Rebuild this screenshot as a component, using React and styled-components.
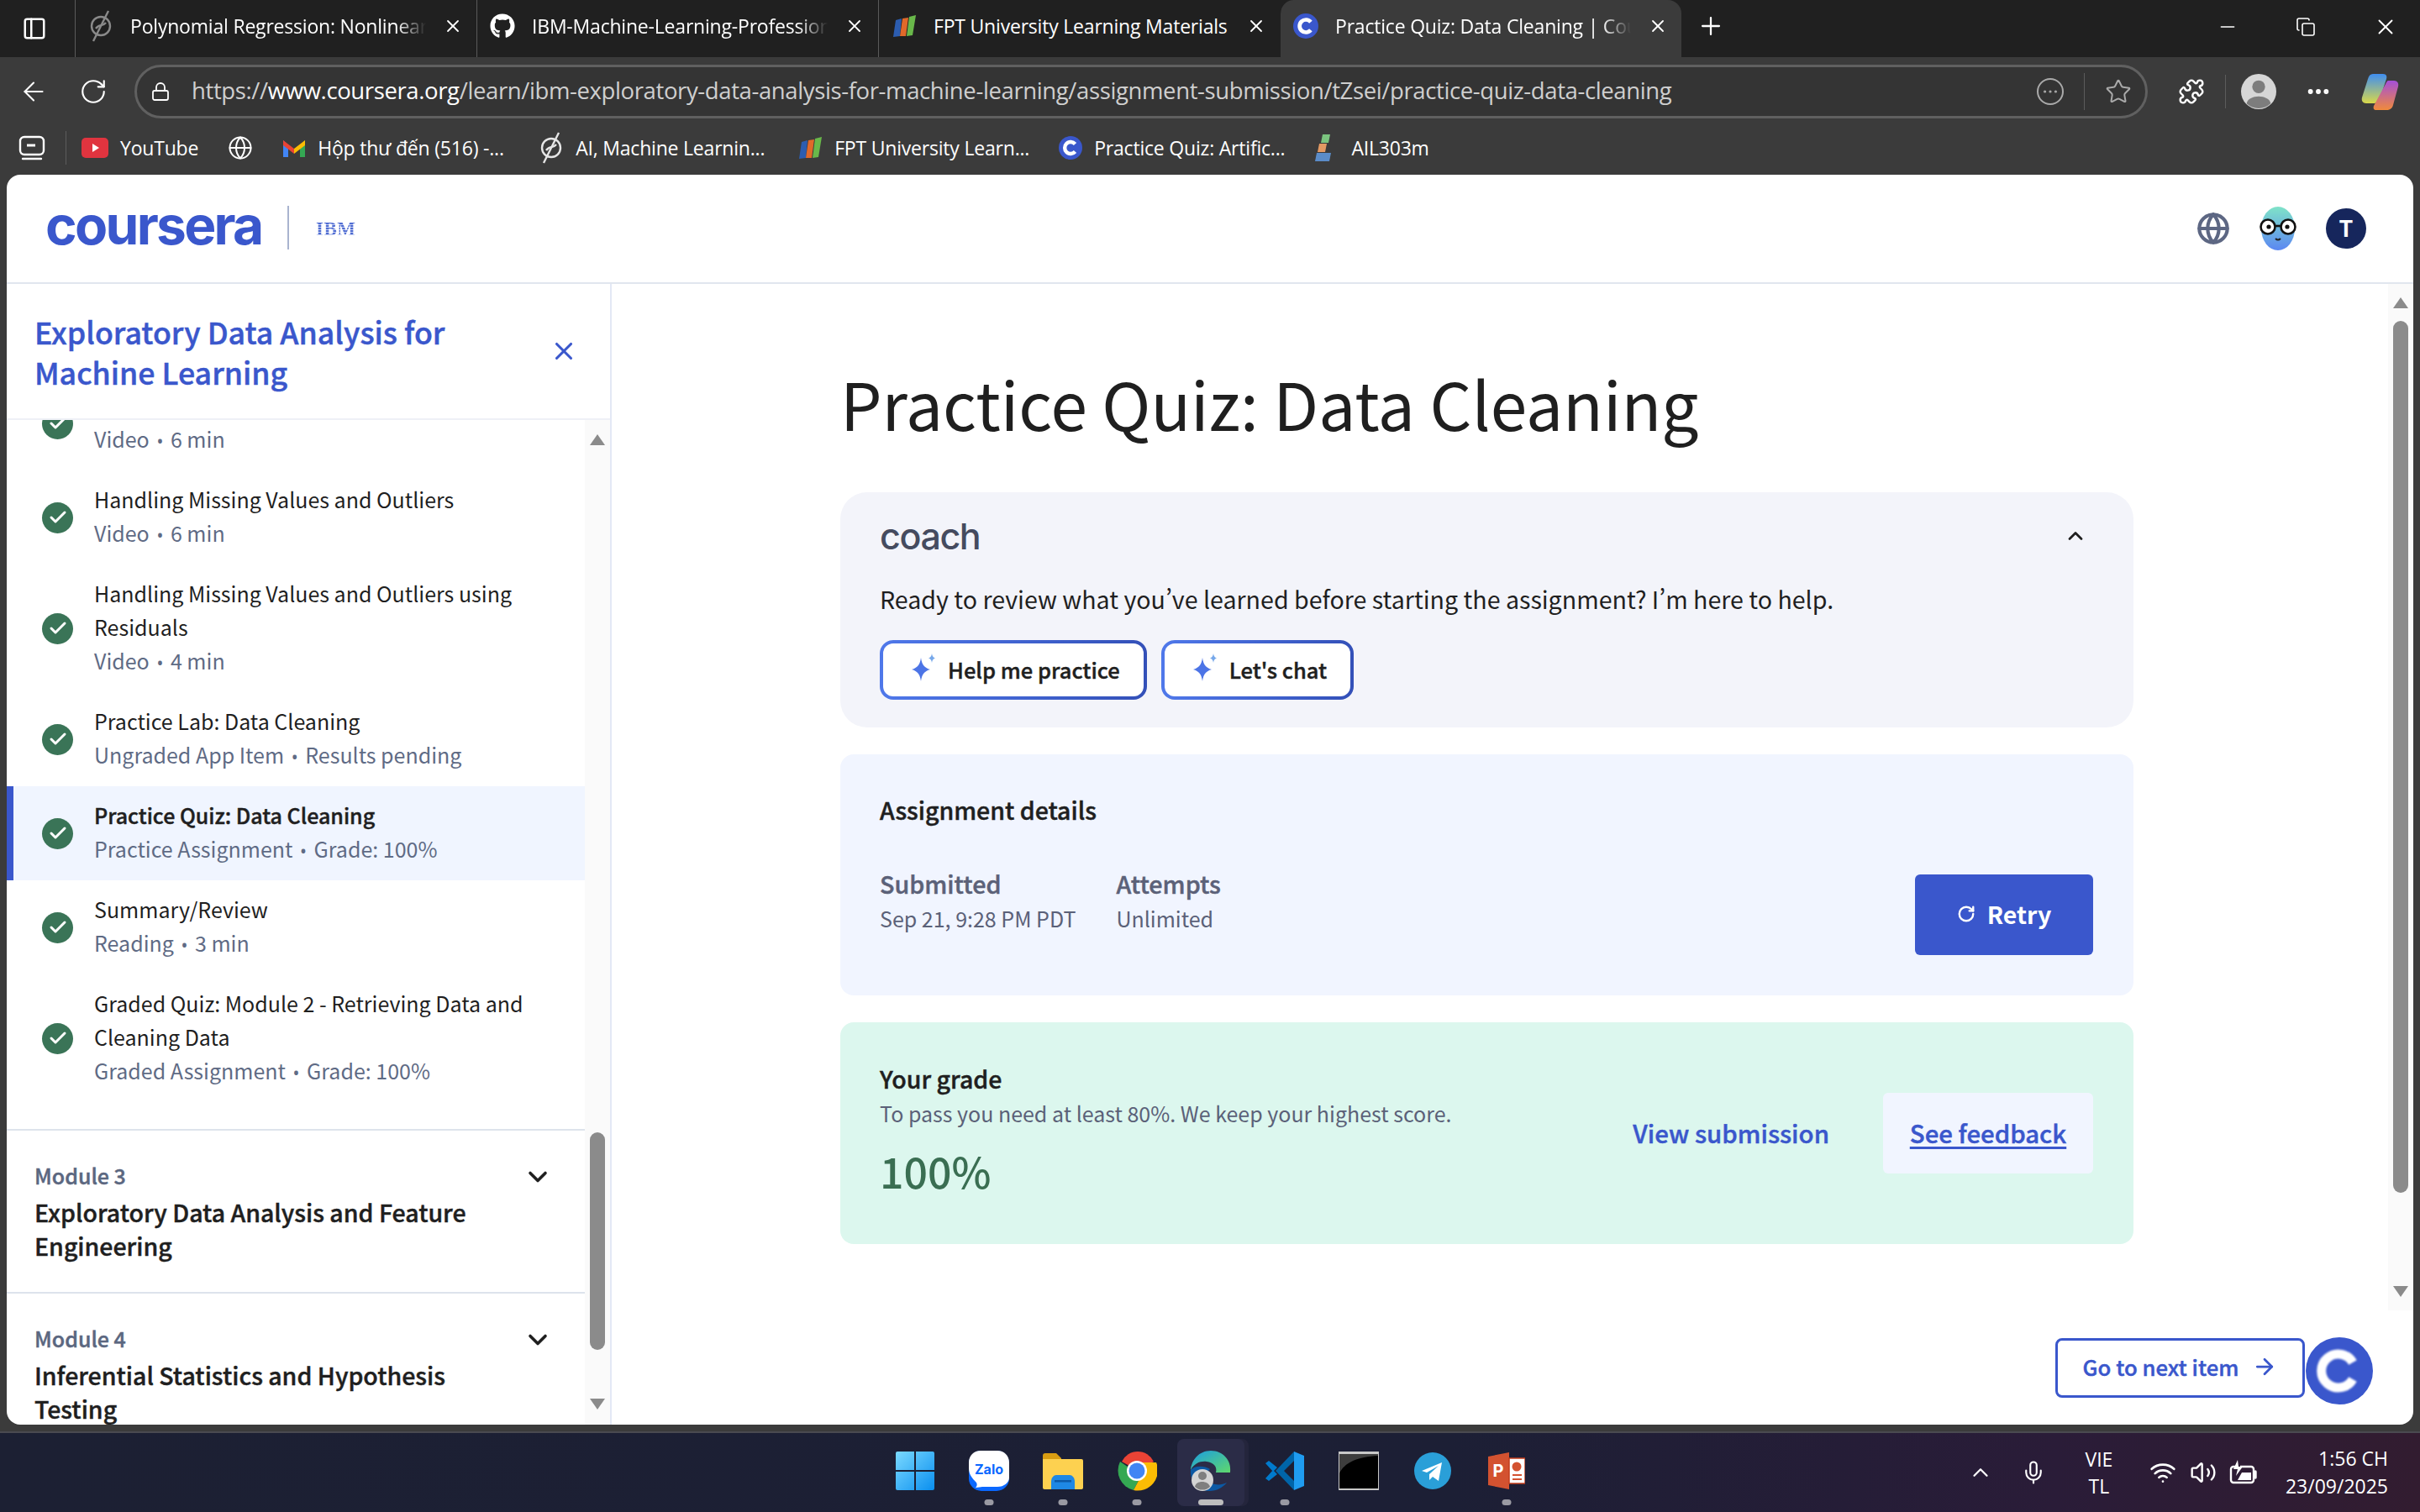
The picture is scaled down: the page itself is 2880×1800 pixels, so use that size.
import React from "react";
import styled, { createGlobalStyle } from "styled-components";
import { X, ChevronDown, ChevronUp, Check, Globe, ArrowRight, ArrowLeft, RotateCw, Plus, Minus, Lock, Star, Puzzle, Ellipsis, Mic, Wifi, Volume2, PanelLeft, Copy } from "lucide-react";
import { FaGithub } from "react-icons/fa";

const SOURCE = `"Noto Sans CJK SC", "Noto Sans", sans-serif`;
const UI = `"Open Sans", "Noto Sans", sans-serif`;
const BLUE = "#3a57cc";
/* the medium cut is a bit lighter than the semibold in the picture */
const SEMI = `font-weight: 500; -webkit-text-stroke: 0.45px currentColor;`;

const Global = createGlobalStyle`
    html, body { margin: 0; padding: 0; background: #3b3b3b; }
    * { box-sizing: border-box; }
`
const Screen = styled.div`
    width: 2880px;
    height: 1800px;
    display: flex;
    flex-direction: column;
    background: #3b3b3b;
    overflow: hidden;
`
/* browser chrome */
const TabStrip = styled.div`
    height: 68px;
    background: #202020;
    display: flex;
    align-items: stretch;
    color: #fff;
    font-family: ${UI};
    font-size: 23px;
    letter-spacing: -0.2px;
`
const StripIcon = styled.div`
    width: 89px;
    display: flex;
    align-items: center;
    justify-content: center;
    padding-right: 8px;
`
const Tab = styled.div`
    width: 478px;
    height: 68px;
    display: flex;
    align-items: center;
    gap: 20px;
    padding: 0 16px 6px 15px;
    background: ${({ $active }) => ($active ? "#3b3b3b" : "transparent")};
    border-radius: ${({ $active }) => ($active ? "16px 16px 0 0" : "0")};
    border-left: ${({ $active }) => ($active ? "1px solid #202020" : "1px solid #5a5a5a")};
    background-clip: padding-box;
`
const TabLabel = styled.span`
    flex: 1;
    white-space: nowrap;
    overflow: hidden;
    -webkit-mask-image: ${({ $fade }) => ($fade ? "linear-gradient(90deg, #000 90%, transparent)" : "none")};
    mask-image: ${({ $fade }) => ($fade ? "linear-gradient(90deg, #000 90%, transparent)" : "none")};
`
const NewTab = styled.div`
    width: 70px;
    display: flex;
    align-items: center;
    justify-content: center;
    padding-bottom: 6px;
`
const WindowButtons = styled.div`
    margin-left: auto;
    display: flex;
    align-items: center;
    gap: 68px;
    padding: 0 26px 4px 0;
`
const Toolbar = styled.div`
    height: 82px;
    display: flex;
    align-items: center;
    padding-left: 22px;
    color: #fff;
`
const ToolGroup = styled.div`
    display: flex;
    align-items: center;
    gap: 36px;
    width: 138px;
`
const AddressBar = styled.div`
    width: 2396px;
    height: 64px;
    border: 3px solid #606060;
    border-radius: 32px;
    background: #343434;
    display: flex;
    align-items: center;
    padding: 0 16px;
    gap: 25px;
`
const UrlText = styled.div`
    flex: 1;
    font-family: ${UI};
    font-size: 27.5px;
    letter-spacing: -0.38px;
    color: #cfcfcf;
    white-space: nowrap;
    padding-bottom: 3px;
    b { font-weight: 400; color: #fff; }
`
const FieldIcons = styled.div`
    display: flex;
    align-items: center;
`
const Sep = styled.div`
    width: 1px;
    height: ${({ $h }) => $h || 40}px;
    background: #5c5c5c;
    margin: ${({ $m }) => $m || "0 24px"};
`
const ToolRight = styled.div`
    display: flex;
    align-items: center;
    padding-left: 36px;
`
const BookmarkBar = styled.div`
    height: 58px;
    display: flex;
    align-items: center;
    padding: 0 0 6px 22px;
    gap: 35px;
    color: #fff;
    font-family: ${UI};
    font-size: 23px;
    letter-spacing: -0.2px;
`
const Bookmark = styled.div`
    display: flex;
    align-items: center;
    gap: 14px;
    white-space: nowrap;
`
const BookmarkLabel = styled.span`
    width: ${({ $w }) => ($w ? `${$w}px` : "auto")};
`
const BarStart = styled.div`
    display: flex;
    align-items: center;
    gap: 24px;
    margin-right: -17px;
`
/* page */
const Page = styled.div`
    height: 1488px;
    margin: 0 8px;
    background: #fff;
    border-radius: 16px;
    overflow: hidden;
    display: flex;
    flex-direction: column;
    font-family: ${SOURCE};
    font-feature-settings: "pwid";
`
const PageHeader = styled.header`
    height: 130px;
    flex: none;
    border-bottom: 2px solid #e1e6ee;
    display: flex;
    align-items: center;
    padding: 0 56px 0 46px;
`
const LogoText = styled.span`
    font-family: "Inter", sans-serif;
    font-weight: 700;
    font-size: 64px;
    line-height: 66px;
    letter-spacing: -2.7px;
    color: ${BLUE};
    width: 288px;
    padding-bottom: 8px;
`
const LogoDivider = styled.div`
    width: 2px;
    height: 52px;
    background: #a9b4cf;
    margin: 0 32px 2px 0;
`
const PartnerLogo = styled.span`
    font-family: "Liberation Serif", serif;
    font-weight: 700;
    font-size: 23px;
    letter-spacing: 0.5px;
    padding-top: 1px;
    background: repeating-linear-gradient(180deg, #4f6cd2 0 2px, #c3cdf0 2px 3px);
    -webkit-background-clip: text;
    background-clip: text;
    color: transparent;
`
const HeaderRight = styled.div`
    margin-left: auto;
    display: flex;
    align-items: center;
    gap: 32px;
`
const Avatar = styled.div`
    width: 48px;
    height: 48px;
    border-radius: 50%;
    background: #16265c;
    color: #fff;
    font-size: 27px;
    font-weight: 700;
    line-height: 46px;
    text-align: center;
`
const Body = styled.div`
    flex: 1;
    min-height: 0;
    display: flex;
`
const Sidebar = styled.aside`
    width: 720px;
    flex: none;
    border-right: 2px solid #e3e8f5;
    display: flex;
    flex-direction: column;
`
const SideHead = styled.div`
    height: 162px;
    flex: none;
    border-bottom: 2px solid #eef0f6;
    display: flex;
    align-items: center;
    justify-content: space-between;
    padding: 0 38px 0 33px;
    color: ${BLUE};
`
const CourseTitle = styled.h2`
    margin: 0;
    font-size: 35.7px;
    line-height: 48px;
    ${SEMI}
    padding-top: 2px;
`
const SideScroll = styled.div`
    position: relative;
    flex: 1;
    min-height: 0;
    overflow: hidden;
`
const SideList = styled.div`
    width: 688px;
    margin-top: -52px;
`
const Lesson = styled.div`
    display: flex;
    align-items: center;
    gap: 25px;
    padding: 14px 16px 18px 42px;
    background: ${({ $active }) => ($active ? "#f0f5ff" : "transparent")};
    box-shadow: ${({ $active }) => ($active ? `inset 8px 0 0 ${BLUE}` : "none")};
`
const DoneMark = styled.div`
    width: 37px;
    height: 37px;
    flex: none;
    margin-top: 4px;
    border-radius: 50%;
    background: #3a7457;
    color: #fff;
    display: flex;
    align-items: center;
    justify-content: center;
`
const LessonText = styled.div`
    font-size: 25px;
    line-height: 40px;
`
const LessonTitle = styled.div`
    color: #1f1f1f;
    ${({ $active }) => ($active ? SEMI : "font-weight: 400;")}
`
const LessonMeta = styled.div`
    color: #5f6b85;
`
const Bullet = styled.span`
    font-family: "Noto Sans", sans-serif;
    font-size: 21px;
    line-height: 0;
    margin: 0 3px;
`
const ModuleGroup = styled.div`
    margin-top: 32px;
`
const Module = styled.div`
    border-top: 2px solid #dde3ec;
    padding: 30px 32px 35px 33px;
    display: flex;
    align-items: flex-start;
    justify-content: space-between;
`
const ModuleLabel = styled.div`
    color: #5b6780;
    font-size: 25px;
    line-height: 47px;
    ${SEMI}
`
const ModuleName = styled.div`
    color: #1f1f1f;
    font-size: 28.5px;
    line-height: 40px;
    ${SEMI}
    width: 570px;
`
const ModuleChevron = styled.div`
    padding: 7px 6px 0 0;
    color: #1f1f1f;
`
const Track = styled.div`
    position: absolute;
    top: ${({ $top }) => $top}px;
    right: ${({ $right }) => $right}px;
    bottom: ${({ $bottom }) => $bottom}px;
    width: ${({ $w }) => $w}px;
    background: #fafafa;
`
const Thumb = styled.div`
    position: absolute;
    left: ${({ $left }) => $left}px;
    top: ${({ $top }) => $top}px;
    height: ${({ $h }) => $h}px;
    width: 18px;
    border-radius: 9px;
    background: #8b8b8b;
`
const Arrow = styled.div`
    position: absolute;
    left: ${({ $left }) => $left}px;
    top: ${({ $top }) => $top}px;
    width: 0;
    height: 0;
    border-left: 9px solid transparent;
    border-right: 9px solid transparent;
    border-bottom: ${({ $down }) => ($down ? "0" : "13px solid #8b8b8b")};
    border-top: ${({ $down }) => ($down ? "13px solid #8b8b8b" : "0")};
`
const Main = styled.main`
    position: relative;
    flex: 1;
    min-width: 0;
    display: flex;
    flex-direction: column;
`
const Content = styled.div`
    height: 1222px;
    flex: none;
    padding: 85px 0 0 272px;
`
const QuizTitle = styled.h1`
    margin: 0 0 51px;
    font-size: 78.4px;
    line-height: 112px;
    font-weight: 400;
    color: #1f1f1f;
`
const Cards = styled.div`
    width: 1539px;
    display: flex;
    flex-direction: column;
    gap: 32px;
`
const Card = styled.section`
    background: ${({ $bg }) => $bg};
    border-radius: ${({ $r }) => $r || 16}px;
    padding: ${({ $p }) => $p};
`
const CoachHead = styled.div`
    display: flex;
    align-items: center;
    justify-content: space-between;
    height: 60px;
    color: #1f1f1f;
    padding-right: 8px;
`
const CoachLogo = styled.span`
    font-family: "Inter", sans-serif;
    font-size: 43px;
    font-weight: 500;
    letter-spacing: -1.4px;
    color: #454b5f;
`
const CoachText = styled.p`
    margin: 25px 0 0;
    font-size: 28.6px;
    line-height: 40px;
    color: #1f1f1f;
`
const CoachButtons = styled.div`
    display: flex;
    gap: 17px;
    margin-top: 29px;
`
const CoachButton = styled.button`
    height: 71px;
    padding: 0 28px 3px 31px;
    display: flex;
    align-items: center;
    gap: 12px;
    border: 4px solid transparent;
    border-radius: 16px;
    background: linear-gradient(#fff, #fff) padding-box, linear-gradient(90deg, #4f78ea, #3350b8) border-box;
    font-family: ${SOURCE};
    font-size: 25.5px;
    ${SEMI}
    color: #1f1f1f;
`
const CardHeading = styled.div`
    font-size: 28.5px;
    line-height: 40px;
    ${SEMI}
    color: #1f1f1f;
`
const DetailRow = styled.div`
    display: flex;
    align-items: flex-start;
    gap: 48px;
    margin-top: 47px;
`
const DetailLabel = styled.div`
    font-size: 28.7px;
    line-height: 42px;
    ${SEMI}
    color: #5b6178;
`
const DetailValue = styled.div`
    font-size: 25px;
    line-height: 40px;
    color: #5b6178;
`
const RetryButton = styled.button`
    margin: 10px 0 0 auto;
    width: 212px;
    height: 96px;
    border: 0;
    border-radius: 6px;
    padding: 0 0 3px;
    background: ${BLUE};
    color: #fff;
    display: flex;
    align-items: center;
    justify-content: center;
    gap: 14px;
    font-family: ${SOURCE};
    font-size: 28.5px;
    font-weight: 700;
`
const GradeRow = styled.div`
    display: flex;
    align-items: center;
    height: 168px;
`
const GradeInfo = styled.div`
    flex: 1;
    padding-bottom: 7px;
`
const GradeNote = styled.div`
    font-size: 25px;
    line-height: 36px;
    color: #5b6178;
    margin-top: 3px;
`
const GradeValue = styled.div`
    font-size: 50px;
    line-height: 68px;
    font-weight: 500;
    color: #3a6e52;
    margin-top: 16px;
`
const TextLink = styled.a`
    font-size: 29.4px;
    ${SEMI}
    color: ${BLUE};
    white-space: nowrap;
    padding-bottom: 3px;
`
const FeedbackBox = styled.div`
    width: 250px;
    height: 96px;
    margin-left: 64px;
    background: #f1f5ff;
    border-radius: 6px;
    display: flex;
    align-items: center;
    justify-content: center;
    a { text-decoration: underline; text-decoration-thickness: 3px; text-underline-offset: 4px; }
`
const NextBar = styled.div`
    flex: 1;
    display: flex;
    align-items: center;
    justify-content: flex-end;
    padding: 0 129px 0 0;
    position: relative;
`
const NextButton = styled.button`
    width: 297px;
    height: 71px;
    background: #fff;
    border: 3px solid ${BLUE};
    border-radius: 8px;
    padding: 0 0 3px;
    display: flex;
    align-items: center;
    justify-content: center;
    gap: 16px;
    font-family: ${SOURCE};
    font-size: 25.7px;
    ${SEMI}
    color: ${BLUE};
`
const FloatBadge = styled.div`
    width: 80px;
    height: 80px;
    border-radius: 50%;
    background: ${BLUE};
    position: absolute;
    right: 48px;
    top: 32px;
    display: flex;
    align-items: center;
    justify-content: center;
`
/* taskbar */
const EdgeLine = styled.div`
    height: 10px;
    flex: none;
    border-bottom: 2px solid #4a4a50;
`
const Taskbar = styled.footer`
    position: relative;
    flex: 1;
    display: flex;
    align-items: center;
    justify-content: center;
    background: linear-gradient(90deg, #1c2033 0%, #1c1f35 60%, #2a1c38 85%, #321c30 100%);
    color: #fff;
    font-family: ${UI};
`
const TaskIcons = styled.div`
    display: flex;
    align-items: center;
    gap: 8px;
    margin-left: 2px;
`
const TaskItem = styled.div`
    position: relative;
    width: 80px;
    height: 80px;
    display: flex;
    align-items: center;
    justify-content: center;
    border-radius: 8px;
    background: ${({ $focus }) => ($focus ? "#2b2c47" : "transparent")};
    box-shadow: ${({ $focus }) => ($focus ? "5px 0 0 #24253c" : "none")};
    padding-bottom: 4px;
`
const TaskDot = styled.span`
    position: absolute;
    bottom: 1px;
    left: 50%;
    transform: translateX(-50%);
    width: ${({ $wide }) => ($wide ? 30 : 11)}px;
    height: 7px;
    border-radius: 4px;
    background: ${({ $wide }) => ($wide ? "#bdbdbd" : "#9a9aa3")};
`
const Tray = styled.div`
    position: absolute;
    right: 38px;
    top: 0;
    bottom: 0;
    display: flex;
    align-items: center;
`
const TrayPiece = styled.div`
    display: flex;
    align-items: center;
    justify-content: center;
    width: ${({ $w }) => $w}px;
`
const TrayLang = styled.div`
    width: 92px;
    text-align: center;
    font-size: 23px;
    line-height: 32px;
    margin: 0 6px 0 4px;
`
const Clock = styled.div`
    margin-left: 26px;
    text-align: right;
    font-size: 23px;
    line-height: 33px;
`

const CourseraMark = ({ size = 28 }) => (
    <svg width={size} height={size} viewBox="0 0 28 28">
        <circle cx="14" cy="14" r="14" fill={BLUE} />
        <path d="M19.5 9.5a7 7 0 1 0 0 9" fill="none" stroke="#fff" strokeWidth="4.4" />
    </svg>
)
const FptMark = ({ size = 30 }) => (
    <svg width={size} height={size} viewBox="0 0 30 30">
        <path d="M5 8l7-2-2 21-8 1z" fill="#2c5db0" />
        <path d="M13 6l7-1-3 22-7 0z" fill="#e0692a" />
        <path d="M21 4l8-2-4 24-7 1z" fill="#69b84a" />
    </svg>
)
const SlashCircle = ({ dim }) => (
    <svg width="30" height="38" viewBox="0 0 30 38" fill="none" stroke={dim ? "#8a8a8a" : "#e6e6e6"} strokeWidth="2.4">
        <circle cx="15" cy="19" r="11" />
        <path d="M24 1L6 37" />
        <path d="M9 22c4-6 8-2 12-7" />
    </svg>
)
const YouTubeMark = () => (
    <svg width="32" height="24" viewBox="0 0 32 24">
        <rect width="32" height="24" rx="5" fill="#e0343f" />
        <path d="M13 7l8 5-8 5z" fill="#fff" />
    </svg>
)
const GmailMark = () => (
    <svg width="28" height="24" viewBox="0 0 28 24">
        <path d="M1 3v20h6V9z" fill="#4285f4" />
        <path d="M27 3v20h-6V9z" fill="#34a853" />
        <path d="M1 3l13 10 0 6L1 9z" fill="#ea4335" />
        <path d="M27 3L14 13v6l13-10z" fill="#fbbc04" />
    </svg>
)
const StackMark = () => (
    <svg width="30" height="34" viewBox="0 0 30 34">
        <path d="M10 1h9l-2 10H8z" fill="#7bc47f" />
        <path d="M6 12h9l-2 10H4z" fill="#e39a63" />
        <path d="M3 23h17l-2 10H1z" fill="#5b8cc8" />
    </svg>
)
const CollectionsMark = () => (
    <svg width="32" height="32" viewBox="0 0 32 32" fill="none" stroke="#fff" strokeWidth="2.4">
        <rect x="2" y="3" width="28" height="21" rx="5" />
        <path d="M10 13h10" strokeWidth="3" />
        <path d="M5 29h22" strokeLinecap="round" />
    </svg>
)
const CopilotMark = () => (
    <svg width="46" height="46" viewBox="0 0 46 46">
        <defs>
            <linearGradient id="cp1" x1="0" y1="0" x2="0" y2="1"><stop offset="0" stopColor="#3f8ef0" /><stop offset="1" stopColor="#d8d84a" /></linearGradient>
            <linearGradient id="cp2" x1="0" y1="0" x2="0" y2="1"><stop offset="0" stopColor="#a44fd8" /><stop offset="1" stopColor="#f08a3c" /></linearGradient>
        </defs>
        <path d="M14 2h12c4 0 5 3 4 6L22 32c-1 3-4 5-8 5H6c-4 0-6-3-5-7L8 8c1-4 3-6 6-6z" fill="url(#cp1)" />
        <path d="M32 10h7c4 0 6 3 5 7l-6 22c-1 4-4 6-8 6H18c-3 0-4-2-3-5l14-26c1-2 2-4 3-4z" fill="url(#cp2)" />
    </svg>
)
const BotFace = () => (
    <svg width="50" height="52" viewBox="0 0 50 52">
        <defs>
            <linearGradient id="bot" x1="0" y1="0" x2="0" y2="1"><stop offset="0" stopColor="#7fe3c8" /><stop offset="1" stopColor="#5b87f2" /></linearGradient>
        </defs>
        <ellipse cx="25" cy="26" rx="20" ry="26" fill="url(#bot)" />
        <circle cx="13" cy="24" r="8.500" fill="#fff" stroke="#111" strokeWidth="2.600" />
        <circle cx="37" cy="24" r="8.500" fill="#fff" stroke="#111" strokeWidth="2.600" />
        <path d="M21 23h8" stroke="#111" strokeWidth="2.600" />
        <circle cx="14" cy="24" r="2.600" fill="#111" />
        <circle cx="36" cy="24" r="2.600" fill="#111" />
        <path d="M22 38q3 3 6 0" fill="none" stroke="#222" strokeWidth="2" />
    </svg>
)
const Sparkle = () => (
    <svg width="34" height="38" viewBox="0 0 34 38">
        <path d="M14 6c1 8 4 12 11 14-7 2-10 6-11 14-1-8-4-12-11-14 7-2 10-6 11-14z" fill="#4c74e6" />
        <path d="M27 1c.4 3 1.500 4.500 4 5.500-2.500 1-3.600 2.500-4 5.500-.4-3-1.500-4.500-4-5.500 2.500-1 3.600-2.500 4-5.500z" fill="#77a8ea" />
    </svg>
)
const BatteryMark = () => (
    <svg width="34" height="32" viewBox="0 0 34 32" fill="none" stroke="#fff" strokeWidth="2.4">
        <path d="M9 9H5a3 3 0 0 0-3 3v13a3 3 0 0 0 3 3h21a3 3 0 0 0 3-3V12a3 3 0 0 0-3-3H13" />
        <path d="M31 15v7" strokeWidth="3.400" strokeLinecap="round" />
        <path d="M10 25l5-9h11v9z" fill="#fff" stroke="none" />
        <path d="M10 1L5 12h5l-2 8 8-11h-5z" fill="#fff" stroke="none" />
    </svg>
)
const WinLogo = () => (
    <svg width="48" height="48" viewBox="0 0 48 48">
        <defs>
            <linearGradient id="win" x1="0" y1="0" x2="1" y2="1"><stop offset="0" stopColor="#7ad9ff" /><stop offset="1" stopColor="#0a8fef" /></linearGradient>
        </defs>
        <path d="M1 3a2 2 0 0 1 2-2h20v22H1zM25 1h20a2 2 0 0 1 2 2v20H25zM1 25h22v22H3a2 2 0 0 1-2-2zM25 25h22v20a2 2 0 0 1-2 2H25z" fill="url(#win)" />
    </svg>
)
const ZaloIcon = () => (
    <svg width="50" height="50" viewBox="0 0 50 50">
        <rect x="1" y="1" width="48" height="48" rx="15" fill="#0a68ff" />
        <path d="M15 1h20c8 0 14 6 14 14v18c0 6-6 11-14 11H17c-2 0-5 1-8 1 2-2 2-4 1-6-5-5-9-10-9-17V15C1 7 7 1 15 1z" fill="#fff" />
        <text x="25" y="29" textAnchor="middle" fontFamily="Inter, sans-serif" fontWeight="700" fontSize="16" fill="#0a68ff">Zalo</text>
    </svg>
)
const FolderIcon = () => (
    <svg width="50" height="44" viewBox="0 0 50 44">
        <path d="M1 4a3 3 0 0 1 3-3h13l6 6v8H1z" fill="#d99d12" />
        <path d="M1 8h46a2 2 0 0 1 2 2v32a2 2 0 0 1-2 2H3a2 2 0 0 1-2-2z" fill="#fdd150" />
        <path d="M11 44v-9c0-5 3-8 6-8h16c3 0 6 3 6 8v9z" fill="#1e88e5" />
        <rect x="15" y="33" width="20" height="2.500" fill="#0d5aa7" />
    </svg>
)
const ChromeIcon = () => (
    <svg width="48" height="48" viewBox="0 0 48 48">
        <path d="M24 24L6 14A21 21 0 0 1 44 14z" fill="#ea4335" transform="translate(0 -1)" />
        <path d="M4 13a24 24 0 0 0 16 34l9-17z" fill="#34a853" />
        <path d="M47 14H24l5 16-9 17A24 24 0 0 0 47 14z" fill="#fbbc04" />
        <circle cx="24" cy="24" r="12" fill="#fff" />
        <circle cx="24" cy="24" r="9.500" fill="#4285f4" />
    </svg>
)
const EdgeIcon = () => (
    <svg width="50" height="50" viewBox="0 0 50 50">
        <defs>
            <linearGradient id="edge" x1="0" y1="0" x2="1" y2="1"><stop offset="0" stopColor="#1b9de2" /><stop offset="1" stopColor="#5fd86c" /></linearGradient>
        </defs>
        <path d="M25 1C11 1 2 12 1 24c4-8 12-11 19-10 8 1 13 6 11 13h17C50 12 39 1 25 1z" fill="url(#edge)" />
        <path d="M1 24c-1 13 9 25 22 25 9 0 16-4 21-10-8 4-18 3-22-3-3-5-2-10 2-13-8-5-19-4-23 1z" fill="#0c59a4" />
        <circle cx="15" cy="36" r="13" fill="#d4d4d4" />
        <circle cx="15" cy="31" r="5" fill="#7f7f7f" />
        <path d="M6 44c1-8 16-8 18 0a13 13 0 0 1-18 0z" fill="#7f7f7f" />
    </svg>
)
const VsCodeIcon = () => (
    <svg width="48" height="48" viewBox="0 0 48 48">
        <path d="M35 1l12 5v36l-12 5z" fill="#1f9cf0" />
        <path d="M35 1L13 24l22 23 0-11-12-12 12-12z" fill="#0065a9" />
        <path d="M1 15l4-3 10 8-5 5zM10 23l5 5-10 8-4-3z" fill="#007acc" />
    </svg>
)
const TerminalIcon = () => (
    <svg width="48" height="46" viewBox="0 0 48 46">
        <rect width="48" height="46" fill="#c8c8c8" />
        <rect x="1" y="3" width="46" height="41" fill="#000" />
        <path d="M1 26c6-13 22-20 46-21V3H1z" fill="#3d3d3d" />
    </svg>
)
const TelegramIcon = () => (
    <svg width="44" height="44" viewBox="0 0 44 44">
        <circle cx="22" cy="22" r="22" fill="#2a9fd8" />
        <path d="M9 22L33 12l-4 22-7-5-4 4v-7l11-10-14 8z" fill="#fff" />
    </svg>
)
const PptIcon = () => (
    <svg width="44" height="44" viewBox="0 0 44 44">
        <path d="M0 5L25 0v44L0 39z" fill="#d35230" />
        <rect x="25" y="7" width="19" height="30" fill="#fff" stroke="#c43e1c" strokeWidth="1.500" />
        <circle cx="34" cy="17" r="5.500" fill="#d35230" />
        <rect x="29" y="26" width="11" height="2" fill="#d35230" />
        <rect x="29" y="31" width="11" height="2" fill="#d35230" />
        <text x="12" y="29" textAnchor="middle" fontFamily="Inter, sans-serif" fontWeight="700" fontSize="20" fill="#fff">P</text>
    </svg>
)

const lessons = [
    { title: ["Data Cleaning"], meta: ["Video", "6 min"] },
    { title: ["Handling Missing Values and Outliers"], meta: ["Video", "6 min"] },
    { title: ["Handling Missing Values and Outliers using", "Residuals"], meta: ["Video", "4 min"] },
    { title: ["Practice Lab: Data Cleaning"], meta: ["Ungraded App Item", "Results pending"] },
    { title: ["Practice Quiz: Data Cleaning"], meta: ["Practice Assignment", "Grade: 100%"], active: true },
    { title: ["Summary/Review"], meta: ["Reading", "3 min"] },
    { title: ["Graded Quiz: Module 2 - Retrieving Data and", "Cleaning Data"], meta: ["Graded Assignment", "Grade: 100%"] },
]
const modules = [
    { label: "Module 3", name: "Exploratory Data Analysis and Feature Engineering" },
    { label: "Module 4", name: "Inferential Statistics and Hypothesis Testing" },
]
const tabs = [
    { icon: <SlashCircle dim />, label: "Polynomial Regression: Nonlinear", fade: true },
    { icon: <FaGithub size={30} />, label: "IBM-Machine-Learning-Professional", fade: true },
    { icon: <FptMark />, label: "FPT University Learning Materials" },
    { icon: <CourseraMark size={30} />, label: "Practice Quiz: Data Cleaning | Coursera", active: true, fade: true },
]
const bookmarks = [
    { icon: <YouTubeMark />, label: "YouTube" },
    { icon: <Globe size={30} strokeWidth={1.6} /> },
    { icon: <GmailMark />, label: "Hộp thư đến (516) -...", width: 228 },
    { icon: <SlashCircle />, label: "AI, Machine Learnin...", width: 229 },
    { icon: <FptMark />, label: "FPT University Learn..." },
    { icon: <CourseraMark />, label: "Practice Quiz: Artific..." },
    { icon: <StackMark />, label: "AIL303m" },
]
const taskApps = [
    { icon: <WinLogo /> },
    { icon: <ZaloIcon />, dot: true },
    { icon: <FolderIcon />, dot: true },
    { icon: <ChromeIcon />, dot: true },
    { icon: <EdgeIcon />, focus: true },
    { icon: <VsCodeIcon />, dot: true },
    { icon: <TerminalIcon /> },
    { icon: <TelegramIcon /> },
    { icon: <PptIcon />, dot: true },
]

const App = () => (
    <Screen>
        <Global />
        <TabStrip>
            <StripIcon><PanelLeft size={30} strokeWidth={2} /></StripIcon>
            {tabs.map((tab, i) => (
                <Tab key={i} $active={tab.active}>
                    {tab.icon}
                    <TabLabel $fade={tab.fade}>{tab.label}</TabLabel>
                    <X size={24} strokeWidth={1.8} />
                </Tab>
            ))}
            <NewTab><Plus size={34} strokeWidth={1.6} /></NewTab>
            <WindowButtons>
                <Minus size={26} strokeWidth={1.5} />
                <Copy size={24} strokeWidth={1.6} />
                <X size={30} strokeWidth={1.5} />
            </WindowButtons>
        </TabStrip>
        <Toolbar>
            <ToolGroup>
                <ArrowLeft size={36} strokeWidth={1.4} />
                <RotateCw size={34} strokeWidth={1.5} />
            </ToolGroup>
            <AddressBar>
                <Lock size={24} strokeWidth={1.8} />
                <UrlText>https://<b>www.coursera.org</b>/learn/ibm-exploratory-data-analysis-for-machine-learning/assignment-submission/tZsei/practice-quiz-data-cleaning</UrlText>
                <FieldIcons>
                    <Ellipsis size={32} strokeWidth={1.5} color="#aaaaaa" style={{ border: "2px solid #aaaaaa", borderRadius: "50%", padding: 3 }} />
                    <Sep $h={44} $m="0 24px" />
                    <Star size={32} strokeWidth={1.5} color="#aaaaaa" />
                </FieldIcons>
            </AddressBar>
            <ToolRight>
                <Puzzle size={32} strokeWidth={1.8} />
                <Sep $h={40} $m="0 18px 0 24px" />
                <svg width="42" height="42" viewBox="0 0 44 44">
                    <circle cx="22" cy="22" r="22" fill="#d6d6d6" />
                    <circle cx="22" cy="16" r="8" fill="#7d7d7d" />
                    <path d="M7 37c2-12 28-12 30 0a22 22 0 0 1-30 0z" fill="#7d7d7d" />
                </svg>
                <Ellipsis size={32} strokeWidth={2.4} style={{ margin: "0 35px 0 34px" }} />
                <CopilotMark />
            </ToolRight>
        </Toolbar>
        <BookmarkBar>
            <BarStart>
                <CollectionsMark />
                <Sep $h={40} $m="0" />
            </BarStart>
            {bookmarks.map((item, i) => (
                <Bookmark key={i}>
                    {item.icon}
                    {item.label && <BookmarkLabel $w={item.width}>{item.label}</BookmarkLabel>}
                </Bookmark>
            ))}
        </BookmarkBar>
        <Page>
            <PageHeader>
                <LogoText>coursera</LogoText>
                <LogoDivider />
                <PartnerLogo>IBM</PartnerLogo>
                <HeaderRight>
                    <Globe size={40} color="#5d6783" strokeWidth={2.5} />
                    <BotFace />
                    <Avatar>T</Avatar>
                </HeaderRight>
            </PageHeader>
            <Body>
                <Sidebar>
                    <SideHead>
                        <CourseTitle>Exploratory Data Analysis for<br />Machine Learning</CourseTitle>
                        <X size={34} strokeWidth={2.2} />
                    </SideHead>
                    <SideScroll>
                        <SideList>
                            {lessons.map((lesson, i) => (
                                <Lesson key={i} $active={lesson.active}>
                                    <DoneMark><Check size={24} strokeWidth={3} /></DoneMark>
                                    <LessonText>
                                        {lesson.title.map((line) => (
                                            <LessonTitle key={line} $active={lesson.active}>{line}</LessonTitle>
                                        ))}
                                        <LessonMeta>{lesson.meta[0]} <Bullet>•</Bullet> {lesson.meta[1]}</LessonMeta>
                                    </LessonText>
                                </Lesson>
                            ))}
                            <ModuleGroup>
                                {modules.map((mod) => (
                                    <Module key={mod.label}>
                                        <div>
                                            <ModuleLabel>{mod.label}</ModuleLabel>
                                            <ModuleName>{mod.name}</ModuleName>
                                        </div>
                                        <ModuleChevron><ChevronDown size={36} strokeWidth={2.4} /></ModuleChevron>
                                    </Module>
                                ))}
                            </ModuleGroup>
                        </SideList>
                        <Track $top={0} $right={0} $bottom={0} $w={30}>
                            <Arrow $left={6} $top={17} />
                            <Thumb $left={6} $top={848} $h={259} />
                            <Arrow $left={6} $top={1165} $down />
                        </Track>
                    </SideScroll>
                </Sidebar>
                <Main>
                    <Content>
                        <QuizTitle>Practice Quiz: Data Cleaning</QuizTitle>
                        <Cards>
                            <Card $bg="#f3f4fa" $r={32} $p="22px 47px 33px">
                                <CoachHead>
                                    <CoachLogo>coach</CoachLogo>
                                    <ChevronUp size={28} strokeWidth={2.4} />
                                </CoachHead>
                                <CoachText>Ready to review what you’ve learned before starting the assignment? I’m here to help.</CoachText>
                                <CoachButtons>
                                    <CoachButton><Sparkle />Help me practice</CoachButton>
                                    <CoachButton><Sparkle />Let's chat</CoachButton>
                                </CoachButtons>
                            </Card>
                            <Card $bg="#f1f5ff" $p="46px 48px 48px 47px">
                                <CardHeading>Assignment details</CardHeading>
                                <DetailRow>
                                    <div>
                                        <DetailLabel>Submitted</DetailLabel>
                                        <DetailValue>Sep 21, 9:28 PM PDT</DetailValue>
                                    </div>
                                    <div>
                                        <DetailLabel>Attempts</DetailLabel>
                                        <DetailValue>Unlimited</DetailValue>
                                    </div>
                                    <RetryButton><RotateCw size={22} strokeWidth={2.6} />Retry</RetryButton>
                                </DetailRow>
                            </Card>
                            <Card $bg="#dcf7ee" $p="48px 48px 48px 47px">
                                <GradeRow>
                                    <GradeInfo>
                                        <CardHeading>Your grade</CardHeading>
                                        <GradeNote>To pass you need at least 80%. We keep your highest score.</GradeNote>
                                        <GradeValue>100%</GradeValue>
                                    </GradeInfo>
                                    <TextLink>View submission</TextLink>
                                    <FeedbackBox><TextLink>See feedback</TextLink></FeedbackBox>
                                </GradeRow>
                            </Card>
                        </Cards>
                    </Content>
                    <NextBar>
                        <NextButton>Go to next item<ArrowRight size={30} strokeWidth={2.2} /></NextButton>
                        <FloatBadge>
                            <svg width="54" height="54" viewBox="0 0 54 54" style={{ filter: "blur(1px)" }}>
                                <path d="M43 17a20 20 0 1 0 0 20" fill="none" stroke="#fff" strokeWidth="11" />
                            </svg>
                        </FloatBadge>
                    </NextBar>
                    <Track $top={0} $right={0} $bottom={136} $w={30}>
                        <Arrow $left={6} $top={16} />
                        <Thumb $left={6} $top={44} $h={1038} />
                        <Arrow $left={6} $top={1193} $down />
                    </Track>
                </Main>
            </Body>
        </Page>
        <EdgeLine />
        <Taskbar>
            <TaskIcons>
                {taskApps.map((app, i) => (
                    <TaskItem key={i} $focus={app.focus}>
                        {app.icon}
                        {app.dot && <TaskDot />}
                        {app.focus && <TaskDot $wide />}
                    </TaskItem>
                ))}
            </TaskIcons>
            <Tray>
                <TrayPiece $w={70}><ChevronUp size={30} strokeWidth={1.8} /></TrayPiece>
                <TrayPiece $w={56}><Mic size={30} strokeWidth={1.7} /></TrayPiece>
                <TrayLang>VIE<br />TL</TrayLang>
                <TrayPiece $w={48}><Wifi size={32} strokeWidth={2} /></TrayPiece>
                <TrayPiece $w={48}><Volume2 size={32} strokeWidth={1.8} /></TrayPiece>
                <TrayPiece $w={48}><BatteryMark /></TrayPiece>
                <Clock>1:56 CH<br />23/09/2025</Clock>
            </Tray>
        </Taskbar>
    </Screen>
)
export default App;
